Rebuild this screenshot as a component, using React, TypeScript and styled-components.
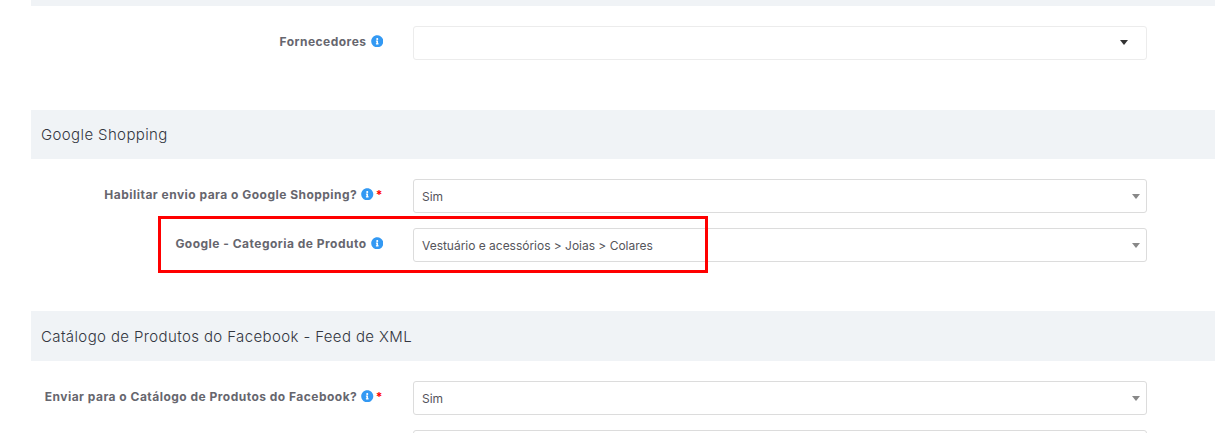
import styled, { createGlobalStyle } from "styled-components";
import { FaInfoCircle } from "react-icons/fa";

const GlobalStyle = createGlobalStyle`
html, body {
  margin: 0;
  padding: 0;
  height: 433px;
  overflow: hidden;
  background: #fff;
  font-family: "Inter", "Liberation Sans", sans-serif;
}
`;

const Page = styled.div`
  position: relative;
  padding-left: 31px;
  height: 433px;
  overflow: hidden;
`;

const TopStrip = styled.div`
  height: 6px;
  background: #f0f3f6;
`;

const SectionHeader = styled.div<{ $height: number }>`
  height: ${(p) => p.$height}px;
  display: flex;
  align-items: center;
  padding-left: 10px;
  background: #f0f3f6;
  color: #33363f;
  font-size: 15px;
  font-weight: 300;
  letter-spacing: 0.38px;
`;

const Fields = styled.div<{ $after: number }>`
  display: flex;
  flex-direction: column;
  gap: 15px;
  padding-top: 20px;
  padding-bottom: ${(p) => p.$after}px;
`;

const Row = styled.div`
  display: grid;
  grid-template-columns: 352px 734px;
  column-gap: 30px;
`;

const Label = styled.label`
  display: flex;
  justify-content: flex-end;
  align-items: center;
  gap: 4px;
  height: 30px;
  color: #66666e;
  font-size: 12px;
  font-weight: 700;
  letter-spacing: 0.48px;
  white-space: nowrap;
`;

const Info = styled(FaInfoCircle)`
  color: #3399f3;
  font-size: 12.5px;
  flex: none;
`;

const Required = styled.span`
  color: #f00;
  font-size: 12px;
  margin-left: -2px;
`;

const Select = styled.div<{ $light?: boolean }>`
  box-sizing: border-box;
  height: 34px;
  display: flex;
  align-items: center;
  justify-content: space-between;
  padding: 0 6px 0 8px;
  background: #fff;
  border: 1px solid ${(p) => (p.$light ? "#ececec" : "#dcdcdc")};
  border-radius: 3px;
  color: #55555b;
  font-size: 12px;
  letter-spacing: -0.02px;
`;

const Caret = styled.span<{ $dark?: boolean }>`
  width: 0;
  height: 0;
  margin-top: ${(p) => (p.$dark ? -1 : 1)}px;
  margin-right: ${(p) => (p.$dark ? 12 : 0)}px;
  border-left: 4px solid transparent;
  border-right: 4px solid transparent;
  border-top: 5px solid ${(p) => (p.$dark ? "#333" : "#888")};
`;

const Highlight = styled.div`
  position: absolute;
  left: 158px;
  top: 216px;
  box-sizing: border-box;
  width: 550px;
  height: 57px;
  border: 3px solid #f00;
  pointer-events: none;
`;

function App() {
  return (
    <Page>
      <GlobalStyle />
      <TopStrip />
      <Fields $after={50}>
        <Row>
          <Label>
            Fornecedores <Info />
          </Label>
          <Select $light>
            <span />
            <Caret $dark />
          </Select>
        </Row>
      </Fields>

      <SectionHeader $height={49}>Google Shopping</SectionHeader>
      <Fields $after={49}>
        <Row>
          <Label>
            Habilitar envio para o Google Shopping? <Info />
            <Required>*</Required>
          </Label>
          <Select>
            Sim
            <Caret />
          </Select>
        </Row>
        <Row>
          <Label>
            Google - Categoria de Produto <Info />
          </Label>
          <Select>
            Vestuário e acessórios &gt; Joias &gt; Colares
            <Caret />
          </Select>
        </Row>
      </Fields>

      <SectionHeader $height={50}>Catálogo de Produtos do Facebook - Feed de XML</SectionHeader>
      <Fields $after={0}>
        <Row>
          <Label>
            Enviar para o Catálogo de Produtos do Facebook? <Info />
            <Required>*</Required>
          </Label>
          <Select>
            Sim
            <Caret />
          </Select>
        </Row>
        <Row>
          <span />
          <Select />
        </Row>
      </Fields>

      <Highlight />
    </Page>
  );
}

export default App;
